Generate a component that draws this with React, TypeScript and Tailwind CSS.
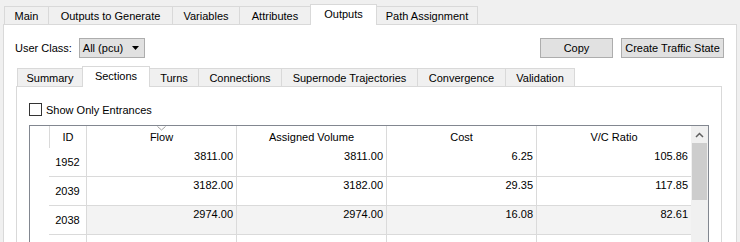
import React from 'react';

type TabProps = { label: string; w: string; active?: boolean; first?: boolean };

const Tab: React.FC<TabProps> = ({ label, w, active, first }) => (
  <div
    className={`${w} ${first ? '' : '-ml-px'} ${
      active
        ? 'relative z-10 h-[21px] -mb-px bg-white pb-[2px]'
        : 'h-[18px] bg-[#f0f0f0]'
    } flex shrink-0 items-center justify-center border-l border-r border-t border-[#d9d9d9] leading-[14px] whitespace-nowrap`}
  >
    {label}
  </div>
);

const rows = [
  { id: '1952', flow: '3811.00', av: '3811.00', cost: '6.25', vc: '105.86', shaded: false },
  { id: '2039', flow: '3182.00', av: '3182.00', cost: '29.35', vc: '117.85', shaded: false },
  { id: '2038', flow: '2974.00', av: '2974.00', cost: '16.08', vc: '82.61', shaded: true },
  { id: '', flow: '', av: '', cost: '', vc: '', shaded: false },
];

export default function App() {
  return (
    <div className="w-[740px] h-[242px] overflow-hidden bg-[#f0f0f0] pt-[4px] font-['Liberation_Sans',Arial,sans-serif] text-[11px] text-black">
      {/* outer tabs */}
      <div className="ml-[4px] flex h-[20px] items-end">
        <Tab first label="Main" w="w-[45px]" />
        <Tab label="Outputs to Generate" w="w-[125px]" />
        <Tab label="Variables" w="w-[68px]" />
        <Tab label="Attributes" w="w-[72px]" />
        <Tab active label="Outputs" w="w-[67px]" />
        <Tab label="Path Assignment" w="w-[102px]" />
      </div>

      <div className="ml-[3px] h-[230px] w-[734px] border border-[#d9d9d9] bg-white pt-[13px]">
        {/* user class row */}
        <div className="flex h-[20px] items-center justify-between pl-[11px] pr-[12px]">
          <div className="flex items-center gap-[7px]">
            <span className="leading-[14px]">User Class:</span>
            <div className="flex h-[20px] w-[66px] items-center justify-between border border-[#adadad] bg-[#e1e1e1] pl-[3px] pr-[4px]">
              <span className="leading-[14px]">All (pcu)</span>
              <svg width="8" height="5" viewBox="0 0 8 5">
                <path d="M0 0 H7 L3.5 4 Z" fill="#000" />
              </svg>
            </div>
          </div>
          <div className="flex items-center gap-[8px]">
            <button className="h-[20px] w-[73px] border border-[#adadad] bg-[#e1e1e1] leading-[14px]">Copy</button>
            <button className="h-[20px] w-[103px] border border-[#adadad] bg-[#e1e1e1] leading-[14px] whitespace-nowrap">
              Create Traffic State
            </button>
          </div>
        </div>

        {/* inner tabs */}
        <div className="ml-[13px] mt-[8px] flex h-[20px] items-end">
          <Tab first label="Summary" w="w-[66px]" />
          <Tab active label="Sections" w="w-[68px]" />
          <Tab label="Turns" w="w-[50px]" />
          <Tab label="Connections" w="w-[84px]" />
          <Tab label="Supernode Trajectories" w="w-[137px]" />
          <Tab label="Convergence" w="w-[89px]" />
          <Tab label="Validation" w="w-[70px]" />
        </div>

        <div className="ml-[12px] h-[200px] w-[706px] border border-[#d9d9d9] bg-white pl-[12px] pt-[16px]">
          <div className="flex h-[13px] items-center gap-[4px]">
            <div className="h-[13px] w-[13px] border border-[#333333] bg-white" />
            <span className="leading-[14px]">Show Only Entrances</span>
          </div>

          {/* table */}
          <div className="mt-[9px] flex h-[140px] w-[680px] border border-[#828790] bg-white">
            <div className="flex w-[661px] flex-col">
              <div className="flex h-[23px]">
                <div className="w-[19px]" />
                <div className="flex w-[38px] items-center justify-center border-l border-r border-[#dadada]">ID</div>
                <div className="relative flex w-[150px] items-center justify-center border-r border-[#dadada]">
                  Flow
                  <svg className="absolute left-[70px] top-0" width="9" height="5" viewBox="0 0 9 5">
                    <path d="M0.5 0.5 L4.5 4 L8.5 0.5" fill="none" stroke="#a0a0a0" strokeWidth="1" />
                  </svg>
                </div>
                <div className="flex w-[150px] items-center justify-center border-r border-[#dadada]">Assigned Volume</div>
                <div className="flex w-[150px] items-center justify-center border-r border-[#dadada]">Cost</div>
                <div className="flex w-[154px] items-center justify-center">V/C Ratio</div>
              </div>
              {rows.map((r, i) => (
                <div key={i} className="flex h-[30px]">
                  <div className="w-[19px]" />
                  <div className="flex w-[38px] items-center justify-center border-b border-r border-[#dadada]">{r.id}</div>
                  <div className={`flex flex-1 border-b border-[#dadada] ${r.shaded ? 'bg-[#f3f3f3]' : 'bg-white'}`}>
                    <div className="w-[150px] border-r border-[#dadada] pr-[3px] pt-px text-right leading-[14px]">{r.flow}</div>
                    <div className="w-[150px] border-r border-[#dadada] pr-[3px] pt-px text-right leading-[14px]">{r.av}</div>
                    <div className="w-[150px] border-r border-[#dadada] pr-[3px] pt-px text-right leading-[14px]">{r.cost}</div>
                    <div className="w-[154px] pr-[3px] pt-px text-right leading-[14px]">{r.vc}</div>
                  </div>
                </div>
              ))}
            </div>
            {/* scrollbar */}
            <div className="flex w-[17px] flex-col bg-[#f0f0f0]">
              <div className="flex h-[17px] items-center justify-center">
                <svg width="9" height="6" viewBox="0 0 9 6">
                  <path d="M1 5 L4.5 1.5 L8 5" fill="none" stroke="#606060" strokeWidth="1.5" />
                </svg>
              </div>
              <div className="mx-px h-[57px] bg-[#cdcdcd]" />
            </div>
          </div>
        </div>
      </div>
    </div>
  );
}
